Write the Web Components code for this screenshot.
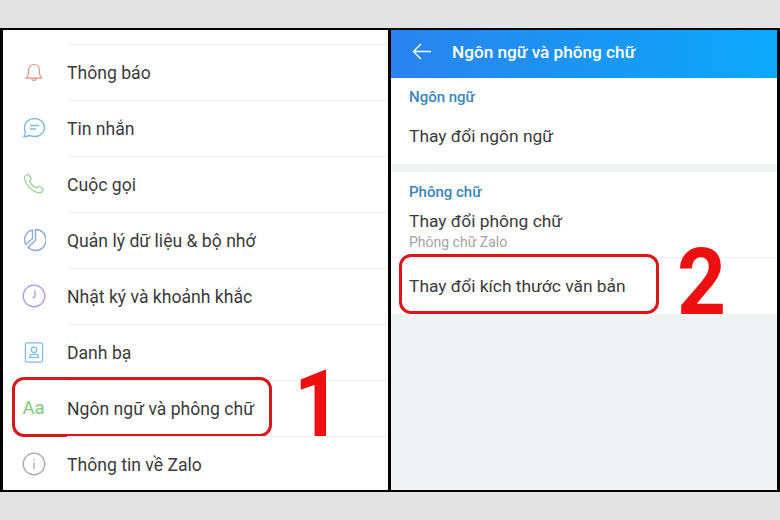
<!DOCTYPE html>
<html lang="vi">
<head>
<meta charset="utf-8">
<title>Zalo</title>
<style>
  html, body { margin: 0; height: 100%; background: #e3e3e3; }
  body { padding-top: 28px; box-sizing: border-box; font-family: Roboto, "Noto Sans", sans-serif; }
</style>
</head>
<body>
<tutorial-frame>
  <settings-list slot="left">
    <setting-row icon="bell">Thông báo</setting-row>
    <setting-row icon="chat">Tin nhắn</setting-row>
    <setting-row icon="phone">Cuộc gọi</setting-row>
    <setting-row icon="pie">Quản lý dữ liệu &amp; bộ nhớ</setting-row>
    <setting-row icon="clock">Nhật ký và khoảnh khắc</setting-row>
    <setting-row icon="contact">Danh bạ</setting-row>
    <setting-row icon="aa">Ngôn ngữ và phông chữ
      <step-mark slot="mark" n="1" box-w="260" num-left="290.500" squeeze=".88"></step-mark>
    </setting-row>
    <setting-row icon="info" last>Thông tin về Zalo</setting-row>
  </settings-list>
  <language-screen slot="right"></language-screen>
</tutorial-frame>

<script>
const ICONS = {
  bell: `<svg width="20" height="21" viewBox="0 0 22 24" fill="none" stroke="#e58a85" stroke-width="1.300" stroke-linejoin="round"><path d="M2 18.500c2-1.600 2.800-3.200 2.800-6.500V9a6.200 6.200 0 0 1 12.400 0v3c0 3.300.8 4.900 2.800 6.500z"/><path d="M8.500 18.500a2.500 2.500 0 0 0 5 0"/></svg>`,
  chat: `<svg width="24" height="22" viewBox="0 0 24 22" fill="none" stroke="#7db8e2" stroke-width="1.300" stroke-linejoin="round" stroke-linecap="round"><path d="M12.500 1.500c5.500 0 10 3.900 10 9s-4.500 9-10 9c-1.900 0-3.400-.3-4.900-1.100-1.600.9-3.900 1.300-6 1.200 1.100-1.100 1.700-2.200 1.800-3.500C2.700 14.300 2.500 12.400 2.500 10.500c0-5.100 4.500-9 10-9z"/><path d="M8.500 8.500h8M8.500 12h5"/></svg>`,
  phone: `<svg width="22" height="22" viewBox="0 0 22 22" fill="none" stroke="#9bd39a" stroke-width="1.300" stroke-linejoin="round"><path d="M2 3.200 4.300 1.500c.5-.3 1-.2 1.300.3L8 5.300c.3.500.2 1-.2 1.300L6.300 7.800c.8 2.700 4.200 6.300 7.200 7.200l1.300-1.500c.3-.4.900-.5 1.300-.2l3.700 2.200c.5.300.6.900.3 1.400l-1.600 2.300c-.4.500-1 .8-1.700.7C9.300 19 2.600 11.900 1.500 4.800c-.1-.6.100-1.200.5-1.600z"/></svg>`,
  pie: `<svg width="24" height="24" viewBox="0 0 24 24" fill="none" stroke="#8fa9dc" stroke-width="1.400" stroke-linejoin="round"><path d="M13.500 1.500a10.500 10.500 0 0 1 0 21 10.500 10.500 0 0 1-7.500-3.200l7.500-6.800z"/><path d="M10.500 2v8.500L3.800 16.500A10 10 0 0 1 10.500 2z"/></svg>`,
  clock: `<svg width="24" height="24" viewBox="0 0 24 24" fill="none" stroke="#ab97dc" stroke-width="1.300" stroke-linecap="round" stroke-linejoin="round"><circle cx="12" cy="12" r="10.800"/><path d="M13 7v5.500l-2 1.200"/></svg>`,
  contact: `<svg width="20" height="23" viewBox="0 0 22 24" fill="none" stroke="#74bde8" stroke-width="1.300" stroke-linejoin="round"><rect x="1.500" y="1.500" width="19" height="21" rx="2"/><circle cx="11" cy="9" r="3"/><path d="M6 17.500c0-2.600 2-3.700 5-3.700s5 1.100 5 3.700z"/></svg>`,
  info: `<svg width="24" height="24" viewBox="0 0 24 24" fill="none" stroke="#a5a5a5" stroke-width="1.300" stroke-linecap="round"><circle cx="12" cy="12" r="10.800"/><path d="M12 11v5.500M12 7.500v.4"/></svg>`
};

class TutorialFrame extends HTMLElement {
  constructor() {
    super();
    this.attachShadow({ mode: "open" }).innerHTML = `
      <style>
        :host { display: grid; grid-template-columns: 385px 386px; column-gap: 3px; height: 464px;
          background: #000; padding: 2px 3px; box-sizing: border-box; overflow: hidden; }
        .pane { background: #fff; min-width: 0; overflow: hidden; }
      </style>
      <div class="pane"><slot name="left"></slot></div>
      <div class="pane"><slot name="right"></slot></div>`;
  }
}

class SettingsList extends HTMLElement {
  constructor() {
    super();
    this.attachShadow({ mode: "open" }).innerHTML = `
      <style>:host { display: block; padding-top: 14px; }</style>
      <slot></slot>`;
  }
}

class SettingRow extends HTMLElement {
  constructor() { super(); this.attachShadow({ mode: "open" }); }
  connectedCallback() {
    const name = this.getAttribute("icon");
    const glyph = name === "aa" ? `<span class="aa">Aa</span>` : ICONS[name];
    this.shadowRoot.innerHTML = `
      <style>
        :host { display: block; position: relative; height: 56px; font-size: 17.6px; color: #3a3a3a; }
        .row { display: flex; align-items: center; height: 100%; }
        .icon { width: 64px; flex: none; display: flex; justify-content: center; padding-right: 3px; box-sizing: border-box; }
        .text { flex: 1; height: 100%; display: flex; align-items: center; border-top: 1px solid #eeeeee; box-sizing: border-box; }
        .aa { font-size: 18.500px; color: #7ec97a; }
      </style>
      <div class="row">
        <div class="icon">${glyph}</div>
        <div class="text"><slot></slot></div>
      </div>
      <slot name="mark"></slot>`;
  }
}

class StepMark extends HTMLElement {
  constructor() { super(); this.attachShadow({ mode: "open" }); }
  connectedCallback() {
    const n = this.getAttribute("n");
    this.shadowRoot.innerHTML = `
      <style>
        :host { position: absolute; inset: 0; pointer-events: none; }
        .box { position: absolute; left: var(--box-left, 9px); top: var(--box-top, -3px); height: 60px; width: ${this.getAttribute("box-w")}px;
          box-sizing: border-box; border: 3px solid #d8161c; border-radius: 12px; }
        .num { position: absolute; left: ${this.getAttribute("num-left")}px; top: var(--num-top, -22px);
          font: bold 93px/1 Roboto, sans-serif; color: #ee1010;
          transform: scaleX(${this.getAttribute("squeeze")}); transform-origin: left top; }
      </style>
      <div class="box"></div>
      <div class="num">${n}</div>`;
  }
}

class LanguageScreen extends HTMLElement {
  constructor() {
    super();
    this.attachShadow({ mode: "open" }).innerHTML = `
      <style>
        :host { display: flex; flex-direction: column; height: 100%; background: #f1f2f4; }
        header { display: flex; align-items: center; height: 48px; flex: none; color: #fff; font-size: 17.2px; font-weight: 500;
          background: linear-gradient(90deg, #2a83ee, #0ca8fb); gap: 21px; padding: 0 0 5px 21px; box-sizing: border-box; }
        section { background: #fff; }
        h2 { margin: 0; font-size: 15px; font-weight: 500; color: #3b86ba; padding: 11px 0 0 18px; line-height: 17px; }
        .one { height: 86px; margin-bottom: 8px; }
        .item { padding-left: 18px; font-size: 17.4px; color: #3a3a3a; }
        .one .item { padding-top: 20px; }
        .two { height: 142px; }
        .two h2 { padding-top: 12px; }
        .font { padding-top: 10px; line-height: 20px; height: 57px; box-sizing: border-box; border-bottom: 1px solid #eee; }
        .font small { display: block; font-size: 14px; color: #a3a3a3; line-height: 22px; }
        .size { position: relative; height: 56px; box-sizing: border-box; display: flex; align-items: center; }
        step-mark { --box-left: 8px; --box-top: -4px; --num-top: -22px; }
      </style>
      <header>
        <svg width="19" height="17" viewBox="0 0 19 17" fill="none" stroke="#fff" stroke-width="1.400"><path d="M19 8.500H1.500M9 1 1.500 8.500 9 16"/></svg>
        <span>Ngôn ngữ và phông chữ</span>
      </header>
      <section class="one">
        <h2>Ngôn ngữ</h2>
        <div class="item">Thay đổi ngôn ngữ</div>
      </section>
      <section class="two">
        <h2>Phông chữ</h2>
        <div class="item font">Thay đổi phông chữ<small>Phông chữ Zalo</small></div>
        <div class="item size">Thay đổi kích thước văn bản
          <step-mark n="2" box-w="260" num-left="286" squeeze=".92"></step-mark>
        </div>
      </section>`;
  }
}

customElements.define("tutorial-frame", TutorialFrame);
customElements.define("settings-list", SettingsList);
customElements.define("setting-row", SettingRow);
customElements.define("step-mark", StepMark);
customElements.define("language-screen", LanguageScreen);
</script>
</body>
</html>
